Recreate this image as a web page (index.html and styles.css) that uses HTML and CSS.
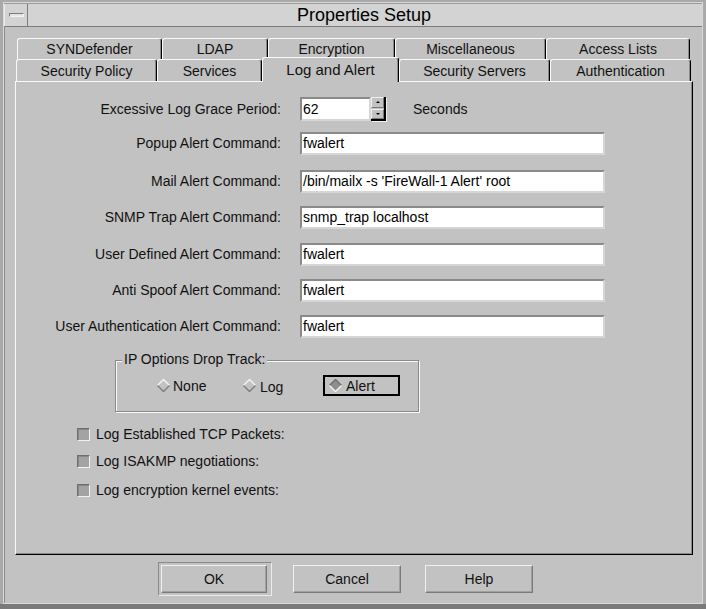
FILE: index.html
```html
<!DOCTYPE html>
<html>
<head>
<meta charset="utf-8">
<title>Properties Setup</title>
<link rel="stylesheet" href="styles.css">
</head>
<body>
<div class="window">
  <div class="inner">
    <div class="titlebar">
      <div class="menu-btn"><span class="menu-glyph"></span></div>
      <div class="title">Properties Setup</div>
    </div>
    <div class="body">
      <div class="tabs">
        <div class="tab-row back">
          <div class="tab w-syn">SYNDefender</div>
          <div class="tab w-ldap">LDAP</div>
          <div class="tab w-enc">Encryption</div>
          <div class="tab w-misc">Miscellaneous</div>
          <div class="tab w-acl">Access Lists</div>
        </div>
        <div class="tab-row front">
          <div class="tab w-sp">Security Policy</div>
          <div class="tab w-svc">Services</div>
          <div class="tab selected w-log">Log and Alert</div>
          <div class="tab w-ss">Security Servers</div>
          <div class="tab w-auth">Authentication</div>
        </div>
      </div>
      <div class="panel">
        <div class="form">
          <div class="lbl first">Excessive Log Grace Period:</div>
          <div class="spin-row">
            <div class="field spin-field">62</div>
            <div class="spin-btns">
              <span class="sb"><span class="tri up"></span></span>
              <span class="sb"><span class="tri down"></span></span>
            </div>
            <span class="unit">Seconds</span>
          </div>
          <div class="lbl">Popup Alert Command:</div>
          <div class="field">fwalert</div>
          <div class="lbl">Mail Alert Command:</div>
          <div class="field">/bin/mailx -s 'FireWall-1 Alert' root</div>
          <div class="lbl">SNMP Trap Alert Command:</div>
          <div class="field">snmp_trap localhost</div>
          <div class="lbl">User Defined Alert Command:</div>
          <div class="field">fwalert</div>
          <div class="lbl">Anti Spoof Alert Command:</div>
          <div class="field">fwalert</div>
          <div class="lbl">User Authentication Alert Command:</div>
          <div class="field">fwalert</div>
        </div>
        <div class="group">
          <div class="group-title">IP Options Drop Track:</div>
          <div class="radios">
            <div class="radio r-none">
              <svg class="diamond" width="13" height="13" viewBox="0 0 13 13"><polygon points="6.5,0.5 12.5,6.5 6.5,12.5 0.5,6.5" fill="#c2c2c2"/><polyline points="0.5,6.5 6.5,0.5 12.5,6.5" fill="none" stroke="#f4f4f4" stroke-width="1.4"/><polyline points="0.5,6.5 6.5,12.5 12.5,6.5" fill="none" stroke="#7c7c7c" stroke-width="1.4"/></svg>
              <span>None</span>
            </div>
            <div class="radio r-log">
              <svg class="diamond" width="13" height="13" viewBox="0 0 13 13"><polygon points="6.5,0.5 12.5,6.5 6.5,12.5 0.5,6.5" fill="#c2c2c2"/><polyline points="0.5,6.5 6.5,0.5 12.5,6.5" fill="none" stroke="#f4f4f4" stroke-width="1.4"/><polyline points="0.5,6.5 6.5,12.5 12.5,6.5" fill="none" stroke="#7c7c7c" stroke-width="1.4"/></svg>
              <span>Log</span>
            </div>
            <div class="radio r-alert">
              <svg class="diamond" width="13" height="13" viewBox="0 0 13 13"><polygon points="6.5,0.5 12.5,6.5 6.5,12.5 0.5,6.5" fill="#8e8e8e"/><polyline points="0.5,6.5 6.5,0.5 12.5,6.5" fill="none" stroke="#6c6c6c" stroke-width="1.4"/><polyline points="0.5,6.5 6.5,12.5 12.5,6.5" fill="none" stroke="#f4f4f4" stroke-width="1.4"/></svg>
              <span>Alert</span>
            </div>
          </div>
        </div>
        <div class="checks">
          <div class="check c1"><span class="box"></span><span>Log Established TCP Packets:</span></div>
          <div class="check c2"><span class="box"></span><span>Log ISAKMP negotiations:</span></div>
          <div class="check c3"><span class="box"></span><span>Log encryption kernel events:</span></div>
        </div>
      </div>
      <div class="buttons">
        <div class="default-ring"><div class="btn btn-ok">OK</div></div>
        <div class="btn btn-cancel">Cancel</div>
        <div class="btn btn-help">Help</div>
      </div>
    </div>
  </div>
</div>
</body>
</html>
```

FILE: styles.css
```css
* { box-sizing: border-box; }
html, body { margin: 0; padding: 0; }
body {
  width: 706px;
  height: 609px;
  overflow: hidden;
  background: #c2c2c2;
  font-family: "Liberation Sans", Arial, sans-serif;
  font-size: 14px;
  color: #111;
}
.window {
  width: 706px;
  height: 609px;
  background: #a9a9a9;
  padding: 2px 3px 0 3px;
  border-bottom: 5px solid #7a7a7a;
  display: flex;
  flex-direction: column;
}
.inner {
  flex: 1;
  background: #c2c2c2;
  border: 1px solid #dadada;
  box-shadow: inset 1px 1px 0 #8c8c8c;
  display: flex;
  flex-direction: column;
}
.titlebar {
  height: 24px;
  display: flex;
  background: #d3d3d3;
  border-top: 1px solid #9a9a9a;
  border-bottom: 1px solid #7c7c7c;
}
.menu-btn {
  width: 24px;
  border-left: 1px solid #ececec;
  border-right: 1px solid #7c7c7c;
  display: flex;
  align-items: center;
  justify-content: center;
}
.menu-glyph {
  width: 15px;
  height: 4px;
  background: #e4e4e4;
  border: 1px solid #7a7a7a;
  border-right-color: #f2f2f2;
  border-bottom-color: #f2f2f2;
}
.title {
  flex: 1;
  text-align: center;
  font-size: 18px;
  line-height: 22px;
  color: #000;
  padding-right: 2px;
}
.body {
  flex: 1;
  display: flex;
  flex-direction: column;
  padding: 11px 9px 0 11px;
}
.tabs { display: flex; flex-direction: column; }
.tab-row { display: flex; align-items: flex-start; }
.tab-row.back { padding-left: 2px; height: 21px; }
.tab-row.front { padding-left: 1px; height: 22px; }
.tab {
  height: 100%;
  border-top: 1px solid #fafafa;
  border-left: 1px solid #fafafa;
  border-right: 1px solid #000;
  border-radius: 3px 3px 0 0;
  box-shadow: inset -1px 0 0 #8a8a8a;
  background: #c2c2c2;
  display: flex;
  align-items: center;
  justify-content: center;
  color: #111;
  flex-shrink: 0;
}
.back .tab { height: 21px; }
.front .tab { height: 22px; }
.front .tab.selected {
  height: 25px;
  margin-top: -2px;
  padding-bottom: 1px;
  position: relative;
  z-index: 2;
  font-size: 15px;
}
.w-syn { width: 145px; }
.w-ldap { width: 106px; }
.w-enc { width: 127px; }
.w-misc { width: 151px; }
.w-acl { width: 144px; }
.w-sp { width: 141px; }
.w-svc { width: 105px; }
.w-log { width: 137px; }
.w-ss { width: 151px; }
.w-auth { width: 141px; }

.panel {
  width: 678px;
  height: 474px;
  border-top: 1px solid #fafafa;
  border-left: 1px solid #fafafa;
  border-right: 1px solid #000;
  border-bottom: 1px solid #000;
  box-shadow: inset -1px -1px 0 #8a8a8a;
  display: flex;
  flex-direction: column;
}
.form {
  display: grid;
  grid-template-columns: 265px 305px;
  grid-template-rows: 35px 38px 36px 37px 36px 36px 23px;
  column-gap: 19px;
  padding-top: 15px;
  align-items: start;
}
.lbl {
  text-align: right;
  height: 23px;
  line-height: 23px;
  white-space: nowrap;
}
.lbl.first { height: 24px; line-height: 24px; }
.field {
  height: 23px;
  background: #fff;
  border-top: 2px solid #8a8a8a;
  border-left: 2px solid #8a8a8a;
  border-bottom: 2px solid #d6d6d6;
  border-right: 2px solid #d6d6d6;
  padding-left: 1px;
  line-height: 19px;
  white-space: nowrap;
  color: #000;
}
.spin-row { display: flex; align-items: flex-start; }
.spin-field { width: 71px; height: 24px; line-height: 20px; }
.spin-btns {
  width: 15px;
  height: 24px;
  display: flex;
  flex-direction: column;
  gap: 1px;
  border-right: 2px solid #000;
  border-bottom: 2px solid #000;
  box-shadow: 1px 1px 0 #f0f0f0;
}
.sb {
  flex: 1;
  background: #c2c2c2;
  border-top: 1px solid #f0f0f0;
  border-left: 1px solid #f0f0f0;
  border-right: 1px solid #7a7a7a;
  border-bottom: 1px solid #7a7a7a;
  display: flex;
  align-items: center;
  justify-content: center;
}
.tri { width: 0; height: 0; border-left: 2px solid transparent; border-right: 2px solid transparent; }
.tri.up { border-bottom: 2px solid #000; }
.tri.down { border-top: 2px solid #000; }
.unit { margin-left: 27px; line-height: 24px; }

.group {
  margin-left: 99px;
  margin-top: 22px;
  width: 304px;
  height: 52px;
  border: 1px solid #8a8a8a;
  box-shadow: 1px 1px 0 #fafafa, inset 1px 1px 0 #fafafa;
}
.group-title {
  width: fit-content;
  margin-top: -10px;
  margin-left: 6px;
  padding: 0 2px;
  line-height: 16px;
  background: #c2c2c2;
}
.radios {
  display: flex;
  align-items: center;
  margin-top: 8px;
  padding-left: 41px;
  height: 21px;
}
.radio { display: flex; align-items: center; height: 21px; }
.radio .diamond { flex-shrink: 0; }
.r-none { width: 86px; gap: 3px; }
.r-log { width: 80px; gap: 4px; padding-top: 3px; }
.r-log .diamond { margin-top: -3px; }
.r-alert {
  width: 77px;
  border: 2px solid #000;
  padding-left: 4px;
  gap: 4px;
}
.checks {
  margin-left: 61px;
  margin-top: 14px;
  display: flex;
  flex-direction: column;
}
.check { display: flex; align-items: center; gap: 6px; height: 16px; }
.c2 { margin-top: 11px; }
.c3 { margin-top: 13px; }
.box {
  width: 13px;
  height: 13px;
  background: #a3a3a3;
  border: 1px solid;
  border-color: #6e6e6e #f2f2f2 #f2f2f2 #6e6e6e;
  box-shadow: inset 1px 1px 0 #888;
  flex-shrink: 0;
}
.buttons {
  flex: 1;
  display: flex;
  align-items: center;
  padding-left: 143px;
  padding-bottom: 1px;
}
.default-ring {
  width: 114px;
  height: 34px;
  padding: 2px;
  border: 1px solid;
  border-color: #8a8a8a #ececec #ececec #8a8a8a;
  margin-right: 21px;
}
.btn {
  height: 28px;
  border: 1px solid;
  border-color: #f0f0f0 #7a7a7a #7a7a7a #f0f0f0;
  box-shadow: inset -1px -1px 0 #a0a0a0;
  display: flex;
  align-items: center;
  justify-content: center;
  color: #111;
}
.btn-ok { width: 106px; }
.btn-cancel { width: 108px; margin-right: 24px; }
.btn-help { width: 108px; }
```
